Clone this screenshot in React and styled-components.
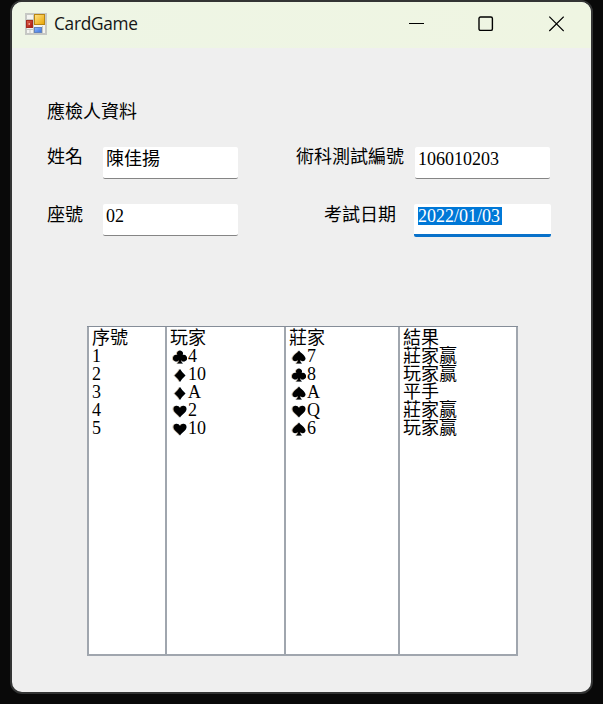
import React from "react";
import styled, { createGlobalStyle } from "styled-components";

const GlobalStyle = createGlobalStyle`
  * { box-sizing: border-box; }
  body { margin: 0; background: #090909; overflow: hidden; }
`;

const Desktop = styled.div`
  height: 704px;
  padding: 0 10px;
  background: #090909;
`;

const Window = styled.main`
  width: 583px;
  height: 694px;
  border: 2px solid #333434;
  border-radius: 12px;
  overflow: hidden;
  background: #efefef;
  color: #000;
  font-family: "Liberation Serif", "Noto Sans CJK TC", serif;
  font-size: 18px;
  line-height: 18px;
`;

const TitleBar = styled.header`
  display: flex;
  align-items: center;
  height: 46px;
  padding: 0 27px 3px 13px;
  background: linear-gradient(90deg, #eef5e5, #eff5e2);
`;

const Title = styled.h1`
  flex: 1;
  margin: 1px 0 0 7px;
  color: #151515;
  font: 400 17.3px/24px "Open Sans", "Noto Sans", sans-serif;
  letter-spacing: -0.3px;
`;

const Controls = styled.div`
  display: flex;
  gap: 54px;
`;

const Form = styled.section`
  padding: 55px 40px 0 35px;
`;

const Heading = styled.h2`
  margin: 0 0 26px;
  font: inherit;
`;

const Fields = styled.div`
  display: grid;
  grid-template-columns: 56px 135px 166px 11px 135px;
  grid-template-rows: 32px 33px;
  row-gap: 25px;
`;

const Label = styled.label`
  grid-column: ${(p) => (p.$right ? 3 : 1)};
  justify-self: ${(p) => (p.$right ? "end" : "start")};
  padding-top: ${(p) => (p.$lower ? 2 : 1)}px;
  margin-right: ${(p) => p.$inset || 0}px;
  white-space: nowrap;
`;

const Field = styled.div`
  grid-column: ${(p) => (p.$right ? 5 : 2)};
  height: ${(p) => (p.$focus ? 33 : 32)}px;
  margin: ${(p) => (p.$focus ? "0 -1px" : "0")};
  padding: 3px ${(p) => (p.$focus ? 4 : 3)}px 0;
  background: #fff;
  border-bottom: ${(p) => (p.$focus ? "3px solid #0871ca" : "1px solid #858585")};
  border-radius: 2px;
`;

const Selection = styled.span`
  display: inline-block;
  height: 18px;
  padding-right: 2px;
  background: #0078d7;
  color: #fff;
`;

const Lists = styled.section`
  display: grid;
  grid-template-columns: 78px 119px 114px 120px;
  width: 431px;
  height: 330px;
  margin: 89px 0 0 75px;
  background: #fff;
  border-top: 1px solid #858d98;
  border-bottom: 2px solid #a0a6ae;
`;

const Column = styled.div`
  padding: 2px 3px;
  border-left: 2px solid #a0a6ae;
  &:last-child { border-right: 2px solid #a0a6ae; }
`;

const Item = styled.div`
  display: flex;
  align-items: center;
  height: 18px;
  white-space: nowrap;
`;

const Suit = styled.svg`
  width: 14px;
  height: 14px;
  margin: 2px 1px 0 3px;
  filter: drop-shadow(-0.7px 0 0 #e5a66288) drop-shadow(0.7px 0 0 #3d91df88);
`;

const suits = {
  club: "M7 .5A3 3 0 0 1 9.6 5A3.3 3.3 0 1 1 8 10Q8 12 10 13.5H4Q6 12 6 10A3.3 3.3 0 1 1 4.4 5A3 3 0 0 1 7 .5Z",
  spade: "M7 .5C8.5 3 13.5 5.5 13.5 8.6C13.5 11.5 9.5 12 8 9.7Q8 12 10 13.5H4Q6 12 6 9.7C4.5 12 .5 11.5 .5 8.6C.5 5.5 5.5 3 7 .5Z",
  diamond: "M7 1Q9 4.5 12.5 7.5Q9 10.5 7 14Q5 10.5 1.5 7.5Q5 4.5 7 1Z",
  heart: "M7 13.5C5.5 10.5 .5 8.5 .5 5C.5 1.5 5.2 .5 7 4C8.8 .5 13.5 1.5 13.5 5C13.5 8.5 8.5 10.5 7 13.5Z",
};

const columns = [
  ["序號", "1", "2", "3", "4", "5"],
  ["玩家", ["club", "4"], ["diamond", "10"], ["diamond", "A"], ["heart", "2"], ["heart", "10"]],
  ["莊家", ["spade", "7"], ["club", "8"], ["spade", "A"], ["heart", "Q"], ["spade", "6"]],
  ["結果", "莊家赢", "玩家赢", "平手", "莊家赢", "玩家赢"],
];

function AppIcon() {
  return (
    <svg width="22" height="22" viewBox="0 0 22 22">
      <defs>
        <linearGradient id="gold" x2="1" y2="1"><stop stopColor="#ffe38a" /><stop offset="1" stopColor="#e9a500" /></linearGradient>
        <linearGradient id="red" x2="1" y2="1"><stop stopColor="#e0604a" /><stop offset="1" stopColor="#a5130d" /></linearGradient>
        <linearGradient id="blue" x2="1" y2="1"><stop stopColor="#8db8ff" /><stop offset="1" stopColor="#3b72dc" /></linearGradient>
      </defs>
      <path d="M1 1H21V21H1Z" fill="#f4f4f1" stroke="#c6c8c4" strokeWidth="2" />
      <path d="M1 6.5H8M8.5 1V21M1 16.5H8M5 16V21M17.5 13V21" stroke="#c6c8c4" />
      <rect x="9.5" y="1.5" width="10" height="10" fill="url(#gold)" stroke="#b98512" />
      <rect x="1.5" y="7.5" width="6" height="7" fill="url(#red)" stroke="#a52a20" />
      <rect x="9.5" y="14.5" width="7" height="5" fill="url(#blue)" stroke="#6283bf" />
      <path d="M3.5 10H5V12H3.5Z" fill="#ef9d8e" />
    </svg>
  );
}

function ControlIcon({ d, rounded }) {
  return (
    <svg width="16" height="16" viewBox="0 0 16 16" fill="none" stroke="#000" strokeWidth="1.2">
      {rounded ? <rect x="1" y="1" width="13.4" height="13.4" rx="1.5" strokeWidth="1.4" /> : <path d={d} />}
    </svg>
  );
}

export default function App() {
  return (
    <Desktop>
      <GlobalStyle />
      <Window>
        <TitleBar>
          <AppIcon />
          <Title>CardGame</Title>
          <Controls>
            <ControlIcon d="M1 7.5H16" />
            <ControlIcon rounded />
            <ControlIcon d="M1.3 .6L15.7 15M15.7 .6L1.3 15" />
          </Controls>
        </TitleBar>
        <Form>
          <Heading>應檢人資料</Heading>
          <Fields>
            <Label>姓名</Label>
            <Field>陳佳揚</Field>
            <Label $right>術科測試編號</Label>
            <Field $right>106010203</Field>
            <Label $lower>座號</Label>
            <Field>02</Field>
            <Label $right $lower $inset={8}>考試日期</Label>
            <Field $right $focus><Selection>2022/01/03</Selection></Field>
          </Fields>
        </Form>
        <Lists>
          {columns.map((items, c) => (
            <Column key={c}>
              {items.map((item, r) => (
                <Item key={r}>
                  {Array.isArray(item) ? (
                    <><Suit viewBox="0 0 14 14"><path d={suits[item[0]]} /></Suit>{item[1]}</>
                  ) : item}
                </Item>
              ))}
            </Column>
          ))}
        </Lists>
      </Window>
    </Desktop>
  );
}
